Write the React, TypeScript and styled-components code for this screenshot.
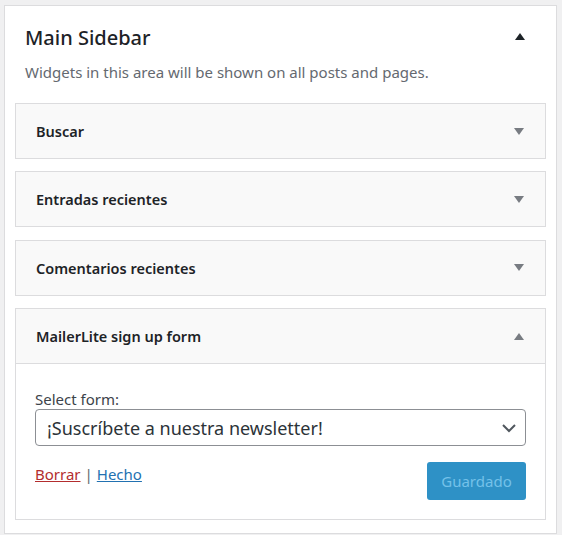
import styled, { createGlobalStyle } from "styled-components";

const GlobalStyle = createGlobalStyle`
  body {
    margin: 0;
    background: #f0f0f1;
    font-family: "Noto Sans", "Open Sans", sans-serif;
    color: #1d2327;
  }
`;

const widgets = ["Buscar", "Entradas recientes", "Comentarios recientes"];

const Arrow = ({ up, color }: { up?: boolean; color: string }) => (
  <svg width="10" height="7" viewBox="0 0 10 7">
    <path d={up ? "M0 7 L5 0 L10 7 Z" : "M0 0 L10 0 L5 7 Z"} fill={color} />
  </svg>
);

const App = () => {
  return (
    <>
      <GlobalStyle />
      <Sidebar>
        <SidebarHeader>
          <TitleRow>
            <Title>Main Sidebar</Title>
            <TitleToggle>
              <Arrow up color="#1d2327" />
            </TitleToggle>
          </TitleRow>
          <Description>Widgets in this area will be shown on all posts and pages.</Description>
        </SidebarHeader>
        <WidgetList>
          {widgets.map((name) => (
            <Widget key={name}>
              <WidgetTop>
                <WidgetTitle>{name}</WidgetTitle>
                <Arrow color="#787c82" />
              </WidgetTop>
            </Widget>
          ))}
          <Widget>
            <WidgetTop $open>
              <WidgetTitle>MailerLite sign up form</WidgetTitle>
              <Arrow up color="#787c82" />
            </WidgetTop>
            <WidgetInside>
              <Label>Select form:</Label>
              <SelectBox>
                <span>¡Suscríbete a nuestra newsletter!</span>
                <svg width="16" height="10" viewBox="0 0 16 10">
                  <path d="M2 2 L8 8 L14 2" fill="none" stroke="#50575e" strokeWidth="2" />
                </svg>
              </SelectBox>
              <Actions>
                <Links>
                  <Link $color="#b32d2e">Borrar</Link>
                  <Sep>|</Sep>
                  <Link $color="#2271b1">Hecho</Link>
                </Links>
                <SaveButton disabled>Guardado</SaveButton>
              </Actions>
            </WidgetInside>
          </Widget>
        </WidgetList>
      </Sidebar>
    </>
  );
};

const Sidebar = styled.div`
  box-sizing: border-box;
  width: 553px;
  height: 529px;
  margin: 5px 0 0 4px;
  background: #fff;
  border: 1px solid #dcdcde;
  padding: 0 10px;
`;

const SidebarHeader = styled.div`
  height: 97px;
  padding: 0 10px;
  box-sizing: border-box;
`;

const TitleRow = styled.div`
  display: flex;
  align-items: flex-start;
  justify-content: space-between;
  padding: 18px 11px 0 0;
  height: 28px;
`;

const TitleToggle = styled.div`
  display: flex;
  margin-top: 9px;
`;

const Title = styled.h2`
  margin: 0;
  font-size: 20px;
  line-height: 28px;
  font-weight: 500;
  color: #1d2327;
`;

const Description = styled.p`
  margin: 10px 0 0;
  font-size: 15px;
  line-height: 20px;
  color: #646970;
`;

const WidgetList = styled.div`
  display: flex;
  flex-direction: column;
  gap: 12.4px;
`;

const Widget = styled.div`
  border: 1px solid #dcdcde;
  background: #fff;
`;

const WidgetTop = styled.div<{ $open?: boolean }>`
  box-sizing: border-box;
  display: flex;
  align-items: center;
  justify-content: space-between;
  padding: 0 21px 0 20px;
  background: #f9f9f9;
  border-bottom: ${({ $open }) => ($open ? "1px solid #dcdcde" : "none")};
  height: ${({ $open }) => ($open ? "55px" : "54px")};
`;

const WidgetTitle = styled.h3`
  margin: 0;
  font-size: 14.5px;
  font-weight: 600;
  color: #1d2327;
`;

const WidgetInside = styled.div`
  padding: 25px 19px 19px;
`;

const Label = styled.div`
  font-size: 15px;
  line-height: 20px;
  color: #3c434a;
`;

const SelectBox = styled.div`
  box-sizing: border-box;
  height: 37px;
  display: flex;
  align-items: center;
  justify-content: space-between;
  padding: 0 8px 0 11px;
  border: 1px solid #8c8f94;
  border-radius: 4px;
  font-size: 18px;
  color: #2c3338;
`;

const Actions = styled.div`
  display: flex;
  justify-content: space-between;
  align-items: flex-start;
  margin-top: 16px;
`;

const Links = styled.div`
  font-size: 15px;
  line-height: 20px;
  color: #646970;
  padding-top: 2px;
`;

const Link = styled.a<{ $color: string }>`
  color: ${({ $color }) => $color};
  text-decoration: underline;
  cursor: pointer;
`;

const Sep = styled.span`
  margin: 0 4px;
`;

const SaveButton = styled.button`
  width: 99px;
  height: 38px;
  border: none;
  border-radius: 3px;
  background: #2e91c6;
  color: #74c1e9;
  font-family: inherit;
  font-size: 15px;
`;

export default App;
